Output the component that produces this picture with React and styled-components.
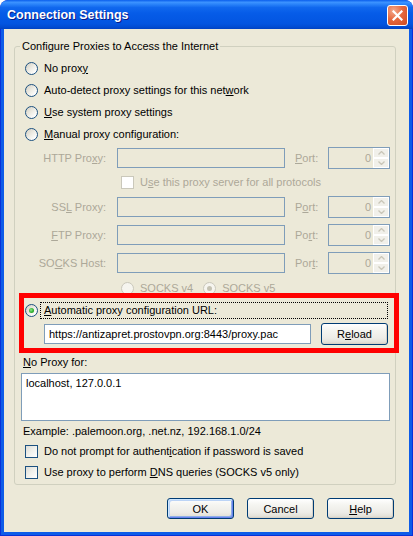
import React from 'react';
import styled, { createGlobalStyle, css } from 'styled-components';

const Global = createGlobalStyle`
  html, body { margin: 0; padding: 0; background: #ffffff; }
  body { font-family: "Liberation Sans", Arial, sans-serif; font-size: 11px; color: #000; }
  * { box-sizing: border-box; }
`;

const GRAY = '#ACA899';

const Window = styled.div`
  width: 413px;
  height: 536px;
  display: flex;
  flex-direction: column;
  background: #0831D9;
  border-radius: 8px 8px 0 0;
  overflow: hidden;
`;

const TitleBar = styled.div`
  height: 29px;
  flex: none;
  display: flex;
  align-items: center;
  justify-content: space-between;
  padding: 0 5px 0 7px;
  border-radius: 8px 8px 0 0;
  background: linear-gradient(to bottom, #0A5EEC 0%, #3C93FF 8%, #2C85FA 14%, #1068EE 26%, #065CE8 45%, #0458E4 65%, #0355E0 82%, #014CD2 93%, #0042C2 100%);
`;

const Title = styled.div`
  color: #fff;
  font: bold 12.5px "Liberation Sans", Arial, sans-serif;
  text-shadow: 1px 1px 0 #0A1A86;
  line-height: 15px;
  margin-top: 2px;
`;

const CloseBtn = styled.div`
  width: 21px;
  height: 21px;
  border: 1px solid #fff;
  border-radius: 3px;
  margin-top: 2px;
  display: grid;
  place-items: center;
  background: radial-gradient(circle at 30% 25%, #F3A98D 0%, #E6693F 45%, #CF4A20 100%);
`;

const Frame = styled.div`
  flex: 1;
  display: flex;
  flex-direction: column;
  margin: 0 1px 1px;
  border: 3px solid #0D5CE8;
  border-top: 0;
  background: #ECE9D8;
  padding: 11px 13px 13px 10px;
`;

const Group = styled.fieldset`
  margin: 0;
  padding: 4px 5px 4px 6px;
  border: 1px solid #D0D0BF;
  border-radius: 3px;
  min-width: 0;
`;

const Legend = styled.legend`
  margin-left: -1px;
  padding: 0 2px;
  line-height: 13px;
  font-size: 11px;
`;

const GroupBody = styled.div`
  display: flex;
  flex-direction: column;
`;

const Option = styled.div`
  display: flex;
  align-items: center;
  gap: 6px;
  height: ${p => p.$h || 22}px;
  padding-left: ${p => p.$pl ?? 4}px;
  margin-top: ${p => p.$mt || 0}px;
  line-height: 13px;
  color: ${p => (p.$disabled ? GRAY : '#000')};
  white-space: nowrap;
`;

const OptionText = styled.span`
  white-space: nowrap;
`;

const Radio = styled.span`
  width: 13px;
  height: 13px;
  flex: none;
  border-radius: 50%;
  display: grid;
  place-items: center;
  border: 1px solid ${p => (p.$disabled ? '#CAC8BB' : '#1C5180')};
  background: ${p => (p.$disabled ? '#F6F5EF' : 'linear-gradient(135deg, #D3CFC2 0%, #ECEAE2 45%, #FFFFFF 85%)')};
  ${p => p.$checked && css`
    &::after {
      content: '';
      width: 5px;
      height: 5px;
      border-radius: 50%;
      background: ${p.$disabled ? '#C5C2B2' : 'radial-gradient(circle at 40% 40%, #8BE88B 0%, #2FAF2F 55%, #1C901C 100%)'};
    }
  `}
`;

const Check = styled.span`
  width: 13px;
  height: 13px;
  flex: none;
  border: 1px solid ${p => (p.$disabled ? '#CAC8BB' : '#1C5180')};
  background: ${p => (p.$disabled ? '#FFFFFF' : 'linear-gradient(135deg, #DCDCD7 0%, #F1F1EC 50%, #FFFFFF 100%)')};
`;

const U = styled.span`
  text-decoration: underline;
  text-underline-offset: 1px;
`;

const ProxyGrid = styled.div`
  display: grid;
  grid-template-columns: 82px 1fr 23px 62px;
  grid-template-rows: 22px 15px 22px 22px 22px 16px;
  column-gap: 10px;
  row-gap: 6px;
  align-items: center;
  margin-top: 2px;
  padding-left: 4px;
  color: ${GRAY};
  line-height: 13px;
`;

const FieldLabel = styled.span`
  text-align: right;
  padding-right: 1px;
  white-space: nowrap;
`;

const PortLabel = styled.span`
  white-space: nowrap;
`;

const TextField = styled.input`
  height: 20px;
  width: 100%;
  min-width: 0;
  margin: 0;
  padding: 0 4px;
  border: 1px solid #7F9DB9;
  border-radius: 0;
  outline: none;
  font: 11px "Liberation Sans", Arial, sans-serif;
  color: #000;
  background: ${p => (p.disabled ? 'transparent' : '#fff')};
  ${p => p.$flex && css`flex: 1;`}
`;

const Span = styled.div`
  grid-column: 2 / -1;
  display: flex;
  align-items: center;
  gap: ${p => p.$gap || 6}px;
  padding-left: 4px;
  white-space: nowrap;
`;

const Inline = styled.div`
  display: flex;
  align-items: center;
  gap: 6px;
`;

const Spinner = styled.div`
  height: 22px;
  border: 1px solid #7F9DB9;
  display: flex;
`;

const SpinValue = styled.span`
  flex: 1;
  text-align: right;
  padding-right: 2px;
  align-self: center;
  color: ${GRAY};
`;

const SpinCol = styled.div`
  width: 16px;
  display: flex;
  flex-direction: column;
`;

const SpinBtn = styled.div`
  flex: 1;
  display: grid;
  place-items: center;
  border: 1px solid #fff;
  background: #F1F0EA;
`;

const AutoSection = styled.div`
  margin: 2px -4px 0 3px;
  padding: 4px 6px 3px 1px;
  outline: 5px solid #FF0000;
  display: flex;
  flex-direction: column;
  gap: 4px;
`;

const AutoRow = styled.div`
  display: flex;
  align-items: center;
  height: 17px;
`;

const FocusLabel = styled.div`
  flex: 1;
  margin-left: 2px;
  height: 17px;
  border: 1px dotted #000;
  padding: 0 3px;
  line-height: 15px;
  white-space: nowrap;
`;

const UrlRow = styled.div`
  display: flex;
  align-items: center;
  gap: 10px;
  height: 22px;
  padding-left: 19px;
`;

const Button = styled.button`
  width: 67px;
  height: ${p => p.$h || 21}px;
  flex: none;
  margin: 0;
  padding: 0;
  border: 1px solid #003C74;
  border-radius: 3px;
  font: 11px "Liberation Sans", Arial, sans-serif;
  color: #000;
  background: linear-gradient(to bottom, #FFFFFF 0%, #F5F5F1 30%, #EDECE7 70%, #E3E1D9 90%, #D6D0C5 100%);
  box-shadow: ${p => (p.$default
    ? 'inset 1px 1px 0 #CEE7FF, inset -1px -1px 0 #6982EE, inset 2px 2px 0 #BCD4F6, inset -2px -2px 0 #8DAEE8'
    : 'inset -1px -1px 0 #D8D2C6')};
`;

const PlainLabel = styled.div`
  line-height: 13px;
  margin-top: ${p => p.$mt || 0}px;
  margin-left: 2px;
  white-space: nowrap;
`;

const TextArea = styled.textarea`
  display: block;
  width: 100%;
  height: 48px;
  margin: 4px 0 0;
  padding: 3px 4px;
  border: 1px solid #7F9DB9;
  border-radius: 0;
  resize: none;
  overflow: hidden;
  outline: none;
  font: 11px "Liberation Sans", Arial, sans-serif;
  line-height: 13px;
  color: #000;
  background: #fff;
`;

const ButtonRow = styled.div`
  display: flex;
  justify-content: flex-end;
  gap: 13px;
  margin-top: 13px;
  padding-right: 2px;
`;

const Arrow = ({ up }) => (
  <svg width="7" height="4" viewBox="0 0 7 4">
    <polyline
      points={up ? '0.5,3.5 3.5,0.5 6.5,3.5' : '0.5,0.5 3.5,3.5 6.5,0.5'}
      fill="none"
      stroke="#C9C6B8"
      strokeWidth="1.3"
    />
  </svg>
);

const PortSpinner = () => (
  <Spinner>
    <SpinValue>0</SpinValue>
    <SpinCol>
      <SpinBtn><Arrow up /></SpinBtn>
      <SpinBtn><Arrow /></SpinBtn>
    </SpinCol>
  </Spinner>
);

const ProxyRow = ({ label, port }) => (
  <>
    <FieldLabel>{label}</FieldLabel>
    <TextField disabled />
    <PortLabel>{port}</PortLabel>
    <PortSpinner />
  </>
);

export default function App() {
  return (
    <>
      <Global />
      <Window>
        <TitleBar>
          <Title>Connection Settings</Title>
          <CloseBtn>
            <svg width="11" height="11" viewBox="0 0 11 11">
              <path d="M1.5 1.5 L9.5 9.5 M9.5 1.5 L1.5 9.5" stroke="#fff" strokeWidth="2.2" strokeLinecap="square" />
            </svg>
          </CloseBtn>
        </TitleBar>
        <Frame>
          <Group>
            <Legend>Configure Proxies to Access the Internet</Legend>
            <GroupBody>
              <Option><Radio /><OptionText>No prox<U>y</U></OptionText></Option>
              <Option><Radio /><OptionText>Auto-detect proxy settings for this net<U>w</U>ork</OptionText></Option>
              <Option><Radio /><OptionText><U>U</U>se system proxy settings</OptionText></Option>
              <Option><Radio /><OptionText><U>M</U>anual proxy configuration:</OptionText></Option>

              <ProxyGrid>
                <ProxyRow label={<>HTTP Pro<U>x</U>y:</>} port={<><U>P</U>ort:</>} />
                <Span>
                  <Check $disabled />
                  <OptionText>U<U>s</U>e this proxy server for all protocols</OptionText>
                </Span>
                <ProxyRow label={<>SS<U>L</U> Proxy:</>} port={<>P<U>o</U>rt:</>} />
                <ProxyRow label={<><U>F</U>TP Proxy:</>} port={<>Po<U>r</U>t:</>} />
                <ProxyRow label={<>SO<U>C</U>KS Host:</>} port={<>Por<U>t</U>:</>} />
                <Span $gap={10}>
                  <Inline><Radio $disabled /><OptionText>SOCKS v4</OptionText></Inline>
                  <Inline><Radio $disabled $checked /><OptionText>SOCKS v5</OptionText></Inline>
                </Span>
              </ProxyGrid>

              <AutoSection>
                <AutoRow>
                  <Radio $checked />
                  <FocusLabel><U>A</U>utomatic proxy configuration URL:</FocusLabel>
                </AutoRow>
                <UrlRow>
                  <TextField $flex readOnly defaultValue="https://antizapret.prostovpn.org:8443/proxy.pac" />
                  <Button $h={22}>R<U>e</U>load</Button>
                </UrlRow>
              </AutoSection>

              <PlainLabel $mt={8}><U>N</U>o Proxy for:</PlainLabel>
              <TextArea readOnly defaultValue="localhost, 127.0.0.1" />
              <PlainLabel $mt={4}>Example: .palemoon.org, .net.nz, 192.168.1.0/24</PlainLabel>

              <Option $h={16} $mt={5}><Check /><OptionText>Do not prompt for authent<U>i</U>cation if password is saved</OptionText></Option>
              <Option $h={16} $mt={5}><Check /><OptionText>Use proxy to perform <U>D</U>NS queries (SOCKS v5 only)</OptionText></Option>
            </GroupBody>
          </Group>
          <ButtonRow>
            <Button $default>OK</Button>
            <Button>Cancel</Button>
            <Button><U>H</U>elp</Button>
          </ButtonRow>
        </Frame>
      </Window>
    </>
  );
}
